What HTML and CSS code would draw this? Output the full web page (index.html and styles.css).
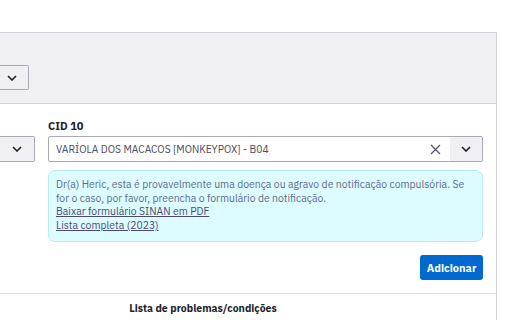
FILE: index.html
```html
<!DOCTYPE html>
<html lang="pt-BR">
<head>
<meta charset="utf-8">
<link rel="stylesheet" href="styles.css">
</head>
<body>
<div class="page">
  <div class="card">
    <div class="head">
      <div class="sel sel-head">
        <span class="toggle"><svg width="10" height="6" viewBox="0 0 10 6"><path d="M1 1l4 4 4-4" fill="none" stroke="#1e1e2a" stroke-width="1.6"/></svg></span>
      </div>
    </div>
    <div class="body">
      <div class="col-left">
        <div class="label">&nbsp;</div>
        <div class="sel sel-left">
          <span class="toggle"><svg width="10" height="6" viewBox="0 0 10 6"><path d="M1 1l4 4 4-4" fill="none" stroke="#1e1e2a" stroke-width="1.6"/></svg></span>
        </div>
      </div>
      <div class="col-right">
        <div class="label">CID 10</div>
        <div class="sel sel-main">
          <span class="value">VARÍOLA DOS MACACOS [MONKEYPOX] - B04</span>
          <span class="clear"><svg width="11" height="11" viewBox="0 0 11 11"><path d="M1 1l9 9M10 1l-9 9" fill="none" stroke="#55556a" stroke-width="1.3"/></svg></span>
          <span class="toggle"><svg width="10" height="6" viewBox="0 0 10 6"><path d="M1 1l4 4 4-4" fill="none" stroke="#1e1e2a" stroke-width="1.6"/></svg></span>
        </div>
        <div class="info">
          <p>Dr(a) Heric, esta é provavelmente uma doença ou agravo de notificação compulsória. Se for o caso, por favor, preencha o formulário de notificação.</p>
          <a href="#">Baixar formulário SINAN em PDF</a>
          <a href="#">Lista completa (2023)</a>
        </div>
        <div class="actions">
          <button class="btn">Adicionar</button>
        </div>
      </div>
    </div>
    <div class="foot">
      <div class="foot-title">Lista de problemas/condições</div>
    </div>
  </div>
</div>
</body>
</html>
```

FILE: styles.css
```css
* { box-sizing: border-box; }
html, body { margin: 0; padding: 0; background: #fff; }
body {
  font-family: "IBM Plex Sans", "Noto Sans", "Open Sans", sans-serif;
  color: #1e1e2a;
  overflow: hidden;
  width: 512px;
  height: 320px;
}
.page { padding-top: 32px; }
.card {
  width: 497px;
  border-top: 1px solid #d3d2dc;
  border-right: 1px solid #d3d2dc;
  height: 300px;
}
.head {
  background: #f0eff4;
  height: 71px;
  border-bottom: 1px solid #d3d2dc;
  padding-top: 32px;
}
.sel {
  display: flex;
  align-items: stretch;
  border: 1px solid #aaa9b8;
  border-radius: 2px;
  background: #fff;
  height: 26px;
}
.toggle {
  width: 32px;
  display: flex;
  align-items: center;
  justify-content: center;
  background: #f0eff4;
}
.sel-head {
  width: 29px;
  height: 25px;
  border-left: none;
  border-radius: 0 2px 2px 0;
  background: #f0eff4;
}
.sel-head .toggle { width: 28px; padding-right: 4px; }
.body {
  display: grid;
  grid-template-columns: 35px 435px;
  column-gap: 13px;
  padding-top: 15px;
  height: 190px;
  border-bottom: 1px solid #e2e1e8;
}
.label {
  font-size: 11px;
  font-weight: 700;
  line-height: 14px;
  height: 14px;
  margin-bottom: 3px;
  color: #1e1e2a;
}
.sel-left {
  border-left: none;
  border-radius: 0 2px 2px 0;
  background: #f0eff4;
}
.sel-left .toggle { width: 34px; }
.sel-main .value {
  flex: 1;
  font-size: 10.3px;
  line-height: 24px;
  padding-left: 7px;
  color: #4a4a60;
  white-space: nowrap;
}
.clear {
  width: 30px;
  display: flex;
  align-items: center;
  justify-content: center;
}
.info {
  margin-top: 8px;
  background: #dcfcff;
  border: 1px solid #b8ebf2;
  border-radius: 7px;
  padding: 7px 8px 7px 7px;
  font-size: 10.4px;
  line-height: 13.5px;
  color: #5c6b8e;
  height: 72px;
}
.info p { margin: 0; }
.info a { display: block; color: #4b4a74; text-decoration: underline; }
.actions {
  display: flex;
  justify-content: flex-end;
  margin-top: 13px;
}
.btn {
  font-family: inherit;
  background: #0069d0;
  color: #fff;
  border: none;
  border-radius: 3px;
  font-size: 11px;
  font-weight: 700;
  height: 25px;
  width: 63px;
  padding: 0;
}
.foot {
  display: grid;
  grid-template-columns: 406px 1fr;
  padding-top: 7px;
}
.foot-title {
  text-align: center;
  font-size: 10.5px;
  font-weight: 700;
  line-height: 14px;
}
```
